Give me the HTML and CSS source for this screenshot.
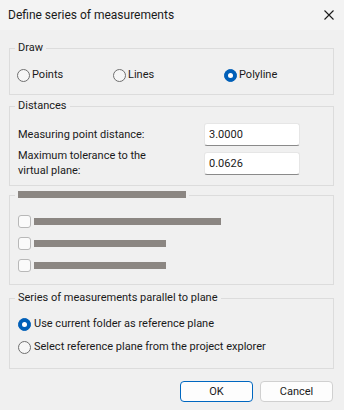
FILE: index.html
```html
<!DOCTYPE html>
<html lang="en">
<head>
    <meta charset="UTF-8">
    <meta name="viewport" content="width=device-width, initial-scale=1.0">
    <title>Define series of measurements</title>
    <link rel="stylesheet" href="styles.css">
</head>
<body>
    <div class="titlebar">
        <span class="title">Define series of measurements</span>
        <svg class="close" width="10" height="10" viewBox="0 0 10 10">
            <path d="M0.5 0.5 L9.5 9.5 M9.5 0.5 L0.5 9.5" stroke="#1a1a1a" stroke-width="1.1" fill="none"/>
        </svg>
    </div>

    <div class="content">
        <fieldset class="group draw">
            <legend>Draw</legend>
            <div class="radio-row">
                <label class="opt"><span class="radio"></span>Points</label>
                <label class="opt"><span class="radio"></span>Lines</label>
                <label class="opt"><span class="radio checked"></span>Polyline</label>
            </div>
        </fieldset>

        <fieldset class="group distances">
            <legend>Distances</legend>
            <div class="field">
                <span class="field-label">Measuring point distance:</span>
                <span class="textbox">3.0000</span>
            </div>
            <div class="field">
                <span class="field-label">Maximum tolerance to the<br>virtual plane:</span>
                <span class="textbox">0.0626</span>
            </div>
        </fieldset>

        <fieldset class="group hidden-opts">
            <legend><span class="bar legend-bar"></span></legend>
            <div class="check-row"><span class="checkbox"></span><span class="bar" style="width: 187px"></span></div>
            <div class="check-row"><span class="checkbox"></span><span class="bar" style="width: 132px"></span></div>
            <div class="check-row"><span class="checkbox"></span><span class="bar" style="width: 132px"></span></div>
        </fieldset>

        <fieldset class="group plane">
            <legend>Series of measurements parallel to plane</legend>
            <label class="opt"><span class="radio checked"></span>Use current folder as reference plane</label>
            <label class="opt"><span class="radio"></span>Select reference plane from the project explorer</label>
        </fieldset>

        <div class="buttons">
            <button class="btn default">OK</button>
            <button class="btn">Cancel</button>
        </div>
    </div>
</body>
</html>
```

FILE: styles.css
```css
body {
    margin: 0;
    padding: 0;
    font-family: Roboto, "Noto Sans", Arial, sans-serif;
    font-size: 11px;
    color: #1a1a1a;
    background-color: #f0f0f0;
    width: 344px;
    height: 410px;
    overflow: hidden;
}

.titlebar {
    height: 30px;
    display: flex;
    align-items: center;
    justify-content: space-between;
    padding: 0 10px 0 8px;
    background-color: #f3f3f3;
}

.title {
    font-size: 12px;
    line-height: 16px;
}

.content {
    padding: 0 10px 0 9px;
}

.group {
    margin: 0;
    border: 1px solid #dcdcdc;
    padding: 0 8px;
    min-width: 0;
}

.group legend {
    padding: 0 3px;
    margin-left: -3px;
    line-height: 16px;
}

.draw {
    margin-top: 10px;
    padding-top: 11px;
    padding-bottom: 11px;
}

.radio-row {
    display: grid;
    grid-template-columns: 96px 111px auto;
    margin-left: -1px;
}

.opt {
    display: flex;
    align-items: center;
    gap: 2px;
    height: 16px;
    line-height: 16px;
    white-space: nowrap;
}

.radio {
    width: 13px;
    height: 13px;
    box-sizing: border-box;
    border: 1px solid #6f6f6f;
    border-radius: 50%;
    background-color: #f6f6f6;
    position: relative;
    flex: none;
}

.radio.checked {
    border-color: #005fb8;
    background-color: #005fb8;
}

.radio.checked::after {
    content: "";
    position: absolute;
    left: 3px;
    top: 3px;
    width: 5px;
    height: 5px;
    border-radius: 50%;
    background-color: #fff;
}

.distances {
    margin-top: 3px;
    padding-top: 9px;
    padding-bottom: 7px;
}

.field {
    display: grid;
    grid-template-columns: 186px 96px;
    align-items: center;
    margin-bottom: 2px;
}

.field:last-child {
    margin-bottom: 0;
}

.field-label {
    line-height: 15px;
}

.textbox {
    height: 23px;
    box-sizing: border-box;
    background-color: #fff;
    border: 1px solid #e6e6e6;
    border-bottom-color: #8a8a8a;
    border-radius: 3px;
    padding: 0 4px;
    line-height: 21px;
}

.hidden-opts {
    margin-top: 5px;
    padding-top: 14px;
    padding-bottom: 11px;
}

.hidden-opts legend {
    line-height: 8px;
    height: 8px;
}

.bar {
    display: block;
    height: 7px;
    background-color: #8b8682;
}

.legend-bar {
    width: 168px;
}

.check-row {
    display: flex;
    align-items: center;
    gap: 3px;
    height: 16px;
    margin-bottom: 6px;
}

.check-row:last-child {
    margin-bottom: 0;
}

.checkbox {
    width: 13px;
    height: 13px;
    box-sizing: border-box;
    border: 1px solid #b8b8b8;
    border-radius: 3px;
    background-color: #fafafa;
}

.plane {
    margin-top: 5px;
    padding-top: 10px;
    padding-bottom: 13px;
}

.plane .opt {
    gap: 3px;
}

.plane .opt + .opt {
    margin-top: 7px;
}

.buttons {
    display: flex;
    justify-content: flex-end;
    gap: 7px;
    margin-top: 12px;
    padding-right: 1px;
}

.btn {
    width: 73px;
    height: 21px;
    font-family: inherit;
    font-size: 11px;
    color: #1a1a1a;
    background-color: #fdfdfd;
    border: 1px solid #d0d0d0;
    border-radius: 4px;
    padding: 0;
}

.btn.default {
    border-color: #0067c0;
}
```
